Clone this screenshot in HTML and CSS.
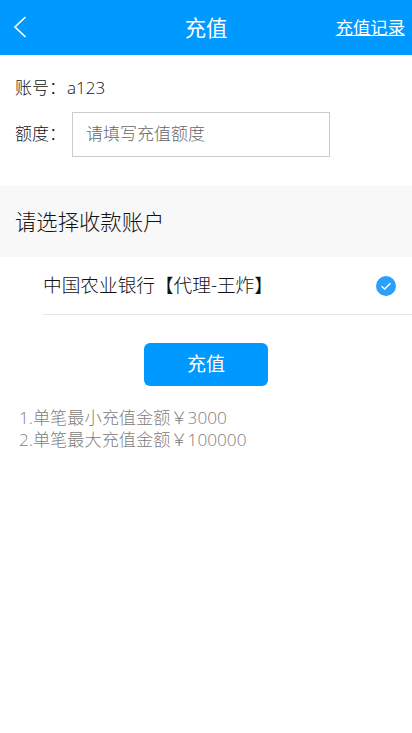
FILE: index.html
```html
<!DOCTYPE html>
<html lang="zh-CN">
<head>
<meta charset="utf-8">
<title>充值</title>
<link rel="stylesheet" href="styles.css">
</head>
<body>
<header class="topbar">
  <a class="back" aria-label="返回">
    <svg width="14" height="22" viewBox="0 0 14 22"><path d="M12.500 1 2 11l10.500 10" fill="none" stroke="#fff" stroke-width="1.700"/></svg>
  </a>
  <h1 class="title">充值</h1>
  <a class="records">充值记录</a>
</header>
<main>
  <section class="form">
    <div class="row account"><span>账号：</span><span class="value">a123</span></div>
    <div class="row amount">
      <label class="label" for="amt">额度：</label>
      <input id="amt" class="input" placeholder="请填写充值额度">
    </div>
  </section>
  <h2 class="section-title">请选择收款账户</h2>
  <div class="bank">
    <span class="bank-name">中国农业银行【代理-王炸】</span>
    <svg class="check" width="20" height="20" viewBox="0 0 20 20"><circle cx="10" cy="10" r="10" fill="#2a9ffb"/><path d="M5.500 10.200 8.600 13 14.500 7.300" fill="none" stroke="#fff" stroke-width="1.500"/></svg>
  </div>
  <div class="actions"><button class="submit">充值</button></div>
  <div class="notes">
    <p>1.单笔最小充值金额￥3000</p>
    <p>2.单笔最大充值金额￥100000</p>
  </div>
</main>
</body>
</html>
```
FILE: styles.css
```css
* { box-sizing: border-box; }
html, body { margin: 0; padding: 0; background: #fff; }
body { font-family: "Open Sans", "Noto Sans CJK SC", sans-serif; font-weight: 300; color: #111; height: 733px; overflow: hidden; }
.topbar { height: 55px; background: #0099ff; color: #fff; display: flex; align-items: center; justify-content: space-between; padding: 0 7px 2px 13px; position: relative; }
.back { display: flex; width: 14px; }
.title { font-size: 21.330px; font-weight: 400; margin: 0; position: absolute; left: 0; right: 0; top: 0; text-align: center; line-height: 55px; }
.records { font-size: 17.330px; font-weight: 400; line-height: 22px; text-decoration: underline; position: relative; }
.form { padding: 22px 0 29px 15px; }
.row { display: flex; align-items: center; }
.account { height: 22px; font-size: 17px; line-height: 22px; }
.value { font-size: 17px; margin-left: 1px; }
.amount { margin-top: 13px; }
.label { width: 57px; font-size: 17px; line-height: 22px; padding-bottom: 2px; }
.input { width: 258px; height: 45px; border: 1px solid #ccc; padding: 0 13px 2px; font: inherit; font-size: 17px; outline: none; color: #333; border-radius: 0; background: #fff; }
.input::placeholder { color: #666; opacity: 1; }
.section-title { height: 71px; margin: 0; background: #f8f8f8; padding-left: 15px; font-size: 21.330px; font-weight: 300; line-height: 71px; }
.bank { height: 58px; margin-left: 43px; border-bottom: 1px solid #e5e5e5; display: flex; align-items: center; justify-content: space-between; padding: 0 16px 0 0; }
.bank-name { font-size: 18.670px; line-height: 24px; margin-bottom: 2px; }
.actions { display: flex; justify-content: center; padding-top: 28px; }
.submit { width: 124px; height: 43px; border: 0; border-radius: 6px; background: #0099ff; color: #fff; font: inherit; font-weight: 400; font-size: 19px; line-height: 24px; padding: 0 0 2px; }
.notes { padding: 21px 0 0 19px; font-size: 17.200px; line-height: 22px; color: #808080; }
.notes p { margin: 0; }
```
